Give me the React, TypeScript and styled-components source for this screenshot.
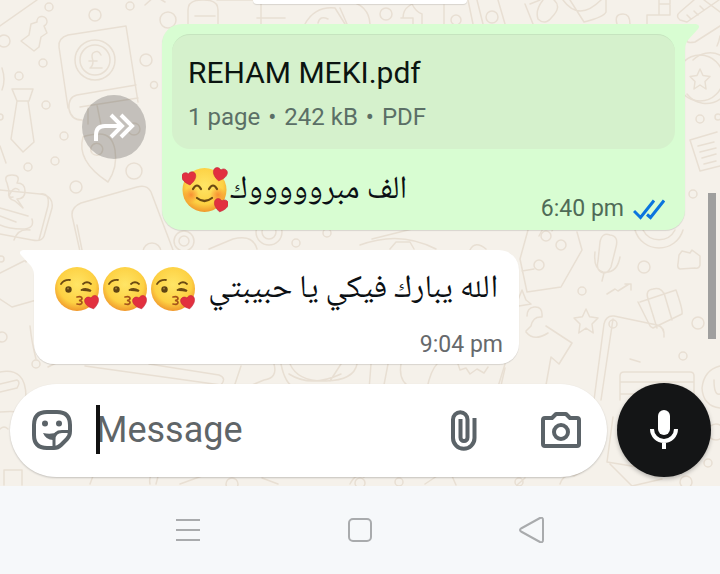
import React from "react";
import styled, { createGlobalStyle } from "styled-components";

const GlobalStyle = createGlobalStyle`
  * { box-sizing: border-box; }
  body { margin: 0; font-family: Roboto, "Noto Sans", "DejaVu Sans", sans-serif; }
  button { border: 0; padding: 0; background: none; cursor: pointer; }
  svg { display: block; flex: none; }
`;

const Screen = styled.div`
  display: flex;
  flex-direction: column;
  min-height: 100vh;
  overflow: hidden;
`;

const Chat = styled.main`
  position: relative;
  flex: 1;
  display: flex;
  flex-direction: column;
  background: #f5f1ea;
`;

const Wallpaper = styled.svg`
  position: absolute;
  inset: 0;
  width: 100%;
  height: 100%;
  fill: none;
  stroke: #e8dfd3;
  stroke-width: 1.5;
  stroke-linejoin: round;
  stroke-linecap: round;
`;

const Messages = styled.div`
  position: relative;
  flex: 1;
  display: flex;
  flex-direction: column;
  gap: 20px;
  padding-bottom: 19px;
`;

const EarlierBubble = styled.div`
  align-self: center;
  width: 214px;
  height: 4px;
  border-radius: 0 0 12px 12px;
  background: #fff;
  box-shadow: 0 1px 1px rgba(0, 0, 0, 0.12);
`;

const MessageRow = styled.div<{ $sent?: boolean }>`
  display: flex;
  align-items: center;
  gap: 16px;
  justify-content: ${(p) => (p.$sent ? "flex-end" : "flex-start")};
  padding: ${(p) => (p.$sent ? "0 35px" : "0 34px")};
`;

const Bubble = styled.article<{ $sent?: boolean }>`
  position: relative;
  flex: 0 1 ${(p) => (p.$sent ? "523px" : "485px")};
  padding: ${(p) => (p.$sent ? "10px 10px 5px" : "16px 16px 3px 20px")};
  border-radius: ${(p) => (p.$sent ? "20px 0 20px 20px" : "0 20px 20px 20px")};
  background: ${(p) => (p.$sent ? "#d8fdd2" : "#fff")};
  box-shadow: 0 1px 1px rgba(0, 0, 0, 0.12);
`;

const Tail = styled.svg<{ $sent?: boolean }>`
  position: absolute;
  top: 0;
  ${(p) => (p.$sent ? "left: 100%;" : "right: 100%; transform: scaleX(-1);")}
  fill: ${(p) => (p.$sent ? "#d8fdd2" : "#fff")};
`;

const ForwardButton = styled.button`
  width: 64px;
  height: 64px;
  border-radius: 50%;
  background: rgba(0, 0, 0, 0.2);
`;

const DocumentCard = styled.a`
  display: block;
  padding: 20px 16px 18px;
  border-radius: 18px;
  border-top: 1px solid #c6e4bf;
  background: #d5f1cc;
  text-decoration: none;
`;

const DocumentName = styled.div`
  font-size: 30px;
  line-height: 36px;
  color: #0b1410;
`;

const DocumentMeta = styled.div`
  display: flex;
  gap: 8px;
  margin-top: 12px;
  font-size: 24px;
  line-height: 28px;
  color: #5b6f66;
`;

const CaptionRow = styled.div`
  display: flex;
  align-items: flex-end;
  justify-content: space-between;
  min-height: 76px;
  padding: 18px 10px 0;
`;

const Text = styled.div<{ $gap: number }>`
  display: flex;
  align-items: center;
  align-self: flex-start;
  gap: ${(p) => p.$gap}px;
  height: 46px;
  font-family: "Noto Naskh Arabic UI", "Noto Sans Arabic", "DejaVu Sans", sans-serif;
  font-size: 32px;
  line-height: 46px;
  white-space: nowrap;
  color: #0b1014;
`;

const ReceivedText = styled(Text)`
  padding-right: 5px;
`;

const EmojiGroup = styled.span`
  display: flex;
  gap: 2px;
`;

const Stamp = styled.div<{ $sent?: boolean }>`
  display: flex;
  align-items: center;
  justify-content: flex-end;
  gap: 9px;
  font-size: 23px;
  line-height: 32px;
  color: ${(p) => (p.$sent ? "#4f6b57" : "#66696c")};
`;

const ReceivedStamp = styled(Stamp)`
  margin-top: 17px;
`;

const ScrollThumb = styled.div`
  position: absolute;
  right: 4px;
  top: 193px;
  width: 8px;
  height: 146px;
  background: #9f9f9e;
`;

const Composer = styled.form`
  position: relative;
  display: flex;
  align-items: center;
  gap: 10px;
  padding: 0 9px 9px 10px;
`;

const Pill = styled.div`
  flex: 1;
  min-width: 0;
  display: flex;
  align-items: center;
  height: 93px;
  padding: 0 26px 0 22px;
  border-radius: 47px;
  background: #fff;
  box-shadow: 0 1px 2px rgba(0, 0, 0, 0.2);
  color: #5b6368;
`;

const Field = styled.div`
  position: relative;
  flex: 1;
  min-width: 0;
  margin: 0 24px;
`;

const MessageInput = styled.input`
  display: block;
  width: 100%;
  padding: 0;
  border: 0;
  outline: 0;
  background: none;
  font: 36px/50px Roboto, sans-serif;
  color: #111;
  &::placeholder { color: #5f6568; opacity: 1; }
`;

const Caret = styled.span`
  position: absolute;
  left: 0;
  top: 0;
  width: 4px;
  height: 49px;
  background: #111;
`;

const IconButton = styled.button`
  color: inherit;
`;

const AttachButton = styled(IconButton)`
  margin-right: 64px;
`;

const MicButton = styled.button`
  display: flex;
  align-items: center;
  justify-content: center;
  width: 94px;
  height: 94px;
  border-radius: 50%;
  background: #141516;
  color: #fff;
  box-shadow: 0 2px 4px rgba(0, 0, 0, 0.25);
`;

const NavBar = styled.nav`
  position: relative;
  display: flex;
  align-items: center;
  justify-content: center;
  gap: 146px;
  height: 88px;
  background: #f6f8fa;
  color: #a9abad;
`;

const star = (x: number, y: number, s: number) =>
  `M${x} ${y - s}l${s * 0.3} ${s * 0.65} ${s * 0.7} ${s * 0.1}-${s * 0.5} ${s * 0.5} ${s * 0.1} ${s * 0.75}-${s * 0.6}-${s * 0.4}-${s * 0.6} ${s * 0.4} ${s * 0.1}-${s * 0.75}-${s * 0.5}-${s * 0.5} ${s * 0.7}-${s * 0.1}z`;

const dots = [
  [49, 7, 4], [95, 15, 6], [130, 6, 4], [168, 20, 8], [4, 41, 6], [43, 63, 4],
  [146, 60, 6], [154, 85, 3.5], [19, 76, 4], [46, 105, 4], [64, 136, 4], [28, 167, 4],
  [55, 161, 4], [134, 171, 8], [76, 187, 6], [134, 129, 6], [0, 117, 3], [184, 241, 10],
  [184, 241, 5], [152, 252, 9], [269, 232, 13], [269, 232, 7], [296, 243, 4],
  [327, 233, 4], [1, 259, 3], [2, 337, 5], [36, 364, 4], [386, 14, 6], [492, 17, 6],
  [456, 20, 5], [700, 119, 4], [718, 117, 3], [693, 194, 4], [582, 291, 4],
  [613, 324, 4], [644, 267, 6], [698, 323, 6], [683, 356, 4], [708, 463, 4],
  [519, 482, 4], [360, 483, 5], [399, 482, 4], [232, 484, 6], [686, 482, 6],
  [716, 432, 8], [539, 265, 5], [561, 245, 5], [546, 236, 5],
];

const doodles = [
  "M0 26L37 0M145 5l10-9 10 6",
  "M37 22a5 5 0 1 1 7 4l3 7-6 4-2 10-5 4-13-10 8-6 2-11z",
  "M12 89h21l-4 12H17zM17 101l-6 38 12 13 11-10-6-41",
  "M68 35l58-9 12 76M68 35q-10 3-9 12l9 61M136 85l-59 10q-9 2-8 14 2 11 13 11M80 107l58-9M97 105l4 20M88 108v16",
  "M83 137q-7 24 25 45 10-15 7-32-3-17-17-16-11 1-15 3zM92 153a6 6 0 1 1 1 1",
  "M0 146l6 17M2 68q4 12 0 22",
  "M73 220q-4-12 8-17l56-16q10-3 14 5l22 58M73 220l8 36",
  "M188 24V10q0-10 14-10h2q14 0 14 10v14M195 16h20M217 0h44v24M257 18h28",
  "M305 24q10-18 30-16l10 16M345 0q24 4 25 24M318 23q2-8 10-4M347 24l-7-16M401 18h12v6M403 18q0-8 6-12l3-2q4 8 10 10v10M444 24V5",
  "M468 0l5 24M477 0l6 24M498 0l7 24M525 4l8 20M530 4l10-4M563 0q16 22 38 0M570 0l14 22q20-5 22-10V0M554 0q8 7-2 17-7 9-14 2-3-9 5-19M617 24q-3-10 6-10 7 0 7 10",
  "M647 24v-9h12V0M659 4h11V0M659 15h11V5M680 20q-5-4 0-8l14-12M680 20l7 2 32-22M687 15l4 4M694 11l4 4M700 6l4 4",
  "M688 38q-4 6 7 4l25-16M693 60a24 24 0 0 1 27-5M687 94a24 24 0 0 0 33 5",
  "M690 140l27-8M690 140l10 31 20-5M698 146l16-4M700 152l16-4M702 158l14-4M704 164l12-3M717 46q2-4 3-10",
  "M0 190l40 4q14 2 12 14l-8 28q-2 6-12 4L0 234M40 194q10-2 8 12l-9 34M0 208l28 8M0 216l16 6M14 240q4-12 16-10",
  "M7 183q-4-8 5-8t5 8q8 0 8 8t-8 8l6 9-8-7q-8-2-6-10zM19 190q-4-4-8 2t2 5",
  "M32 219q3 10-10 10T0 225M77 225l5 25",
  "M0 273l24-12q8-2 12 10l4 28-28 8L0 299M26 262l8-10M30 326q2 18 6 33",
  "M0 372q26-5 26 25M0 384l17-4q4 2 0 8L0 392M0 412q22-2 26 4M0 429q4-4 8 0M4 485v-15h18v15",
  "M48 367l8-4M85 366l136 19q6-7-2-10l-70-11M233 390l8-24M274 364q4 14-10 16l-24 10M281 364q4 20 14 24M290 364q8 18 36 17t31-17M330 381l11-17M289 374q22 14 52 0M371 364l-2 26M388 364l-5 26M401 364q-3 18 11 24M437 364q-6 6-10 24M458 364l2 6 6-2 4 6 7-5 7 4 4-6M505 364l-8 26",
  "M209 249l24-10q20-5 24 10M360 245q40-15 76 4M372 239l44-11M470 250q5-10 16-1M390 249l6-7h14l4 7",
  "M518 300l4-10 4 10 5 4-12 2",
  "M526 331l5-5q2-10 11-9 1-11-8-10-7 1-7 9M526 332q8 10 22 1M546 326l26 17-13 21-8-7-5 28M505 368l-5 22",
  "M527 292l34-5 21-37-5-18M527 292l-7-33 8-29M522 271l12-2M539 236l8-15M552 231l2-4",
  "M600 242q2-10 10-7 9 1 6 12l-5 20q-4 8-10 5-5-3-3-11zM595 252q-2 17 8 20 14 2 17-15M604 273l-2 8",
  "M635 230a25 25 0 0 0 48 0M643 230a18 18 0 0 0 32 0M679 255l3-4 8 2 2-3 8 6v9q-1 4-5 3l-15 1q-3-1-2-5z",
  "M607 294l8-5 3 2 11-7M625 284h6v6",
  "M640 302l36-12q7 20 6 24l-29 14q-3-1-4-4l-11-22M648 299l9 29M664 293l8 27M648 299q-3-9 5-10 8-2 11 5",
  "M594 400l10-76q2-9 10-8l43 9q8 2 7 12M601 400l12-81M630 359l10 3M620 400v-24q0-4 4-4h66q4 0 4 4v24M620 382h74M620 394h40",
  "M720 366q-16 4-18 22 1 18 18 20M714 380q0 16 6 14M656 470l-49-8 6-45M610 464l22 22 30-7M560 484q4-11 14-8l10-6M425 484l12-8h15l4 9M350 484q6-12 14-7M90 484l3-8M150 484q-2-10 7-12M156 484q2-6 3-14M180 484l22-8M262 478l16 6",
  "M517 485l8-7M704 0l16 12",
];

const Backdrop = () => (
  <Wallpaper viewBox="0 0 720 486" preserveAspectRatio="xMinYMin slice" aria-hidden="true">
    {dots.map(([x, y, r], i) => (
      <circle key={i} cx={x} cy={y} r={r} />
    ))}
    {doodles.map((d, i) => (
      <path key={i} d={d} />
    ))}
    <circle cx="95" cy="60" r="20" />
    <circle cx="95" cy="60" r="15" />
    <path d="M101 55q-3-6-8-2-2 2 0 8 0 5-3 7h12M89 61h8" />
    <circle cx="700" cy="78" r="23" />
    <path d={star(700, 79, 10)} />
    <path d={star(586, 321, 12)} />
  </Wallpaper>
);

const Heart = ({ x, y, r = 0 }: { x: number; y: number; r?: number }) => (
  <path
    transform={`translate(${x} ${y}) rotate(${r})`}
    d="M0 7C-5 4-7 1-7-2C-7-6-2-7 0-4C2-7 7-6 7-2C7 1 5 4 0 7z"
    fill="#e2303f"
    stroke="#c3283c"
    strokeWidth="0.6"
  />
);

const FaceFill = ({ id }: { id: string }) => (
  <defs>
    <radialGradient id={id} cx="0.5" cy="0.4" r="0.6">
      <stop offset="0" stopColor="#ffe566" />
      <stop offset="0.7" stopColor="#fdd143" />
      <stop offset="1" stopColor="#f0982c" />
    </radialGradient>
    <radialGradient id={`${id}-blush`}>
      <stop offset="0" stopColor="#f77f2e" stopOpacity="0.8" />
      <stop offset="1" stopColor="#f77f2e" stopOpacity="0" />
    </radialGradient>
  </defs>
);

const LovingFace = () => (
  <svg width="46" height="46" viewBox="0 0 46 46" role="img" aria-label="🥰">
    <FaceFill id="loving" />
    <circle cx="22.5" cy="23" r="22" fill="url(#loving)" />
    <circle cx="9" cy="28" r="8" fill="url(#loving-blush)" />
    <circle cx="36" cy="28" r="8" fill="url(#loving-blush)" />
    <g fill="none" stroke="#6b4a12" strokeWidth="2.2" strokeLinecap="round">
      <path d="M11 22q4-7 8 0M27 22q4-7 8 0" />
      <path d="M15 31q7.500 6 15 0" />
    </g>
    <Heart x={7} y={11} r={-8} />
    <Heart x={38} y={7} r={12} />
    <Heart x={39} y={38} r={12} />
  </svg>
);

const KissFace = ({ id }: { id: string }) => (
  <svg width="46" height="46" viewBox="0 0 46 46" role="img" aria-label="😘">
    <FaceFill id={id} />
    <circle cx="23" cy="23" r="22" fill={`url(#${id})`} />
    <circle cx="14.5" cy="23.5" r="3.2" fill="#5f4413" />
    <circle cx="14" cy="22.5" r="1" fill="#a58034" />
    <g fill="none" stroke="#6b4a12" strokeWidth="1.8" strokeLinecap="round">
      <path d="M7 18q3-4.500 9-4M29 18q4-3.500 8 0M27.500 24q4-2.500 9 .5M29 24q4 0 7 1" />
    </g>
    <path
      d="M23 31q5-1 5 1.500 0 1.500-3 2 3 .3 3 2 0 2.500-5 1.500"
      fill="none"
      stroke="#a5541a"
      strokeWidth="1.7"
      strokeLinecap="round"
    />
    <Heart x={38} y={36} r={-14} />
  </svg>
);

const ForwardIcon = () => (
  <svg width="64" height="64" viewBox="0 0 64 64" fill="none" stroke="#fff" strokeWidth="4">
    <path d="M14 46v-6q0-9 9-9h17" />
    <path d="M29 20l11 11-11 11M39 20l11 11-11 11" />
  </svg>
);

const TickIcon = () => (
  <svg width="32" height="21" viewBox="0 0 32 21" fill="none" stroke="#0b75de" strokeWidth="3" role="img" aria-label="Read">
    <path d="M1 12l6.500 6.500L21 1.500M14 15.500l3.500 3L31 1.500" />
  </svg>
);

const StickerIcon = () => (
  <svg width="40" height="40" viewBox="0 0 40 40" fill="none" stroke="currentColor" strokeWidth="4">
    <path d="M38 21V15Q38 2 25 2H15Q2 2 2 15v10q0 13 13 13h7q4 0 7-3l6-6q3-3 3-8z" />
    <path d="M38 21.500h-8q-8 0-8 8V38" strokeWidth="3" />
    <path d="M11 23q8 2 15-1l-5 8Q14 30 11 23z" fill="currentColor" stroke="none" />
    <circle cx="13" cy="13.5" r="3" fill="currentColor" stroke="none" />
    <circle cx="27" cy="13.5" r="3" fill="currentColor" stroke="none" />
  </svg>
);

const ClipIcon = () => (
  <svg width="26" height="41" viewBox="0 0 26 41" fill="none" stroke="currentColor" strokeWidth="4">
    <path d="M23.500 8v20a10.700 10.700 0 0 1-21.500 0V9.500a7.200 7.200 0 0 1 14.500 0V27.500a3.500 3.500 0 0 1-7 0V9" />
  </svg>
);

const CameraIcon = () => (
  <svg width="40" height="36" viewBox="0 0 40 36" fill="none" stroke="currentColor" strokeWidth="4" strokeLinejoin="round">
    <path d="M4 6h7l4-4h10l4 4h7q2 0 2 2v24q0 2-2 2H4q-2 0-2-2V8q0-2 2-2z" />
    <circle cx="20" cy="20" r="7" />
  </svg>
);

const MicIcon = () => (
  <svg width="28" height="40" viewBox="0 0 28 40" fill="none" stroke="currentColor" strokeWidth="4">
    <rect x="8" y="0" width="12" height="25" rx="6" fill="currentColor" stroke="none" />
    <path d="M2 19a12 12 0 0 0 24 0M14 31v8" />
  </svg>
);

const tailPath = "M0 0H11Q16 1 13 5L3 16Q0 20 0 26Z";

export default function App() {
  return (
    <Screen>
      <GlobalStyle />
      <Chat>
        <Backdrop />
        <Messages>
          <EarlierBubble />
          <MessageRow $sent>
            <ForwardButton type="button" aria-label="Forward">
              <ForwardIcon />
            </ForwardButton>
            <Bubble $sent>
              <Tail $sent width="15" height="26" viewBox="0 0 15 26" aria-hidden="true">
                <path d={tailPath} />
              </Tail>
              <DocumentCard href="#document">
                <DocumentName>REHAM MEKI.pdf</DocumentName>
                <DocumentMeta>
                  <span>1 page</span>
                  <span>•</span>
                  <span>242 kB</span>
                  <span>•</span>
                  <span>PDF</span>
                </DocumentMeta>
              </DocumentCard>
              <CaptionRow>
                <Text dir="rtl" lang="ar" $gap={2}>
                  <span>{"الف مبر" + "و".repeat(5) + "ك"}</span>
                  <LovingFace />
                </Text>
                <Stamp $sent>
                  <time>6:40 pm</time>
                  <TickIcon />
                </Stamp>
              </CaptionRow>
            </Bubble>
          </MessageRow>
          <MessageRow>
            <Bubble>
              <Tail width="15" height="26" viewBox="0 0 15 26" aria-hidden="true">
                <path d={tailPath} />
              </Tail>
              <ReceivedText dir="rtl" lang="ar" $gap={12}>
                <span>الله يبارك فيكي يا حبيبتي</span>
                <EmojiGroup>
                  <KissFace id="kiss-a" />
                  <KissFace id="kiss-b" />
                  <KissFace id="kiss-c" />
                </EmojiGroup>
              </ReceivedText>
              <ReceivedStamp>
                <time>9:04 pm</time>
              </ReceivedStamp>
            </Bubble>
          </MessageRow>
        </Messages>
        <Composer onSubmit={(e) => e.preventDefault()}>
          <Pill>
            <IconButton type="button" aria-label="Stickers">
              <StickerIcon />
            </IconButton>
            <Field>
              <MessageInput type="text" placeholder="Message" aria-label="Message" />
              <Caret />
            </Field>
            <AttachButton type="button" aria-label="Attach">
              <ClipIcon />
            </AttachButton>
            <IconButton type="button" aria-label="Camera">
              <CameraIcon />
            </IconButton>
          </Pill>
          <MicButton type="button" aria-label="Record voice message">
            <MicIcon />
          </MicButton>
        </Composer>
        <ScrollThumb />
      </Chat>
      <NavBar aria-label="System">
        <IconButton type="button" aria-label="Recent apps">
          <svg width="26" height="26" viewBox="0 0 26 26" stroke="currentColor" strokeWidth="2">
            <path d="M1 3h24M1 13h24M1 23h24" />
          </svg>
        </IconButton>
        <IconButton type="button" aria-label="Home">
          <svg width="26" height="26" viewBox="0 0 26 26" fill="none" stroke="currentColor" strokeWidth="2">
            <rect x="2" y="2" width="22" height="22" rx="4" />
          </svg>
        </IconButton>
        <IconButton type="button" aria-label="Back">
          <svg width="26" height="26" viewBox="0 0 26 26" fill="none" stroke="currentColor" strokeWidth="2" strokeLinejoin="round">
            <path d="M2 11.500L21 1q3-1 3 2v20q0 3-3 2L2 14.500q-2-1.500 0-3z" />
          </svg>
        </IconButton>
      </NavBar>
    </Screen>
  );
}
